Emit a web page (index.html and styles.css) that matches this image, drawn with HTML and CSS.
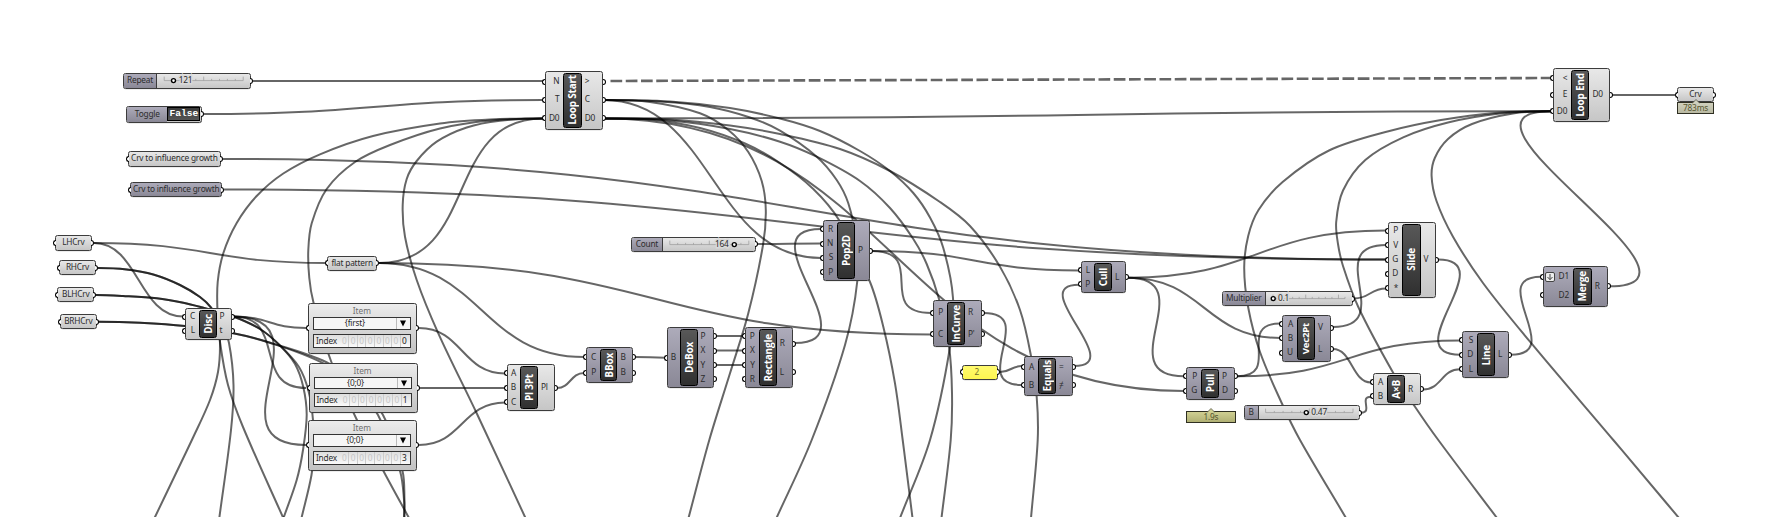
FILE: index.html
```html
<!DOCTYPE html>
<html lang="en">
<head>
<meta charset="utf-8">
<title>Growth definition</title>
<link rel="stylesheet" href="styles.css">
</head>
<body>
<main class="canvas" id="canvas">
<svg class="wires" id="wires" width="1788" height="517" viewBox="0 0 1788 517"></svg>
</main>
<script src="graph.js"></script>
</body>
</html>
```
FILE: styles.css
```css
* { box-sizing: border-box; }
body { margin: 0; background: #fff; }
.canvas {
  position: relative;
  width: 1788px;
  height: 517px;
  overflow: hidden;
  background: #fff;
  font-family: "Noto Sans", "Open Sans", sans-serif;
  font-size: 8.3px;
  letter-spacing: -.2px;
  line-height: 10px;
  color: #2c2c2c;
}
.wires { position: absolute; left: 0; top: 0; fill: none; stroke: #000; stroke-opacity: .6; stroke-width: 2; }
.wires .stream { stroke-width: 2.6; stroke-dasharray: 11.7 3.55; }

.box {
  position: absolute;
  display: flex;
  border: 1px solid #3c3c3c;
  border-radius: 2.5px;
  background: linear-gradient(#e8e8e8, #c6c6c6);
  box-shadow: 0 .3px .5px rgba(0,0,0,.3);
  white-space: nowrap;
}
.hidden { background: linear-gradient(#adabba, #8a8896); }

.grip {
  position: absolute;
  top: calc(50% - 3px);
  width: 3px;
  height: 6px;
  border: 1.4px solid #000;
  background: #fff;
}
.grip.in { right: 100%; border-right: 0; border-radius: 3px 0 0 3px; }
.grip.out { left: 100%; border-left: 0; border-radius: 0 3px 3px 0; }

/* Components: input column, name capsule, output column */
.ports { display: flex; flex-direction: column; padding: 1px 0; }
.ports.right { flex: 1; }
.port { position: relative; flex: 1; display: flex; align-items: center; }
.port span { position: relative; top: -.5px; }
.ports.left .port { justify-content: flex-end; padding-right: 4px; }
.ports.right .port { padding-left: 3px; }
.ports .grip.in { right: calc(100% + 1px); }
.ports .grip.out { left: calc(100% + 1px); }
.name {
  margin: 1px 0;
  border: 1px solid #000;
  border-radius: 2.5px;
  background: linear-gradient(#585858, #303030);
  display: flex;
  align-items: center;
  justify-content: center;
  color: #fff;
  font-family: "Open Sans", "Noto Sans", sans-serif;
  font-weight: 700;
  line-height: 16px;
}
.name span { writing-mode: vertical-rl; text-orientation: sideways; transform: rotate(180deg); }
.flatten { width: 10px; height: 10px; margin-right: 4px; flex: none; }

/* Floating parameters */
.param { align-items: center; justify-content: center; }
.param > span { position: relative; top: -.5px; }
.panel { background: linear-gradient(#fffa6e, #fdf650); color: #74702a; padding-right: 7px; }

/* Sliders and toggles */
.caption {
  display: flex; align-items: center; justify-content: center;
  background: linear-gradient(#adabba, #8a8896);
  border-right: 1px solid #3c3c3c;
  border-radius: 1.5px 0 0 1.5px;
  padding-bottom: 1px;
}
.track { flex: 1; }
.track svg { display: block; overflow: visible; }
.rail { stroke: #9a9a9a; stroke-width: .7; fill: none; }
.knob { stroke: #000; stroke-width: 1.4; fill: #fff; }
.halo { stroke: #d9d9d9; stroke-width: 3px; paint-order: stroke; fill: #2c2c2c; }
.switch {
  flex: 1; margin: 0 1px 1px 0;
  display: flex; align-items: center; justify-content: center;
  border: 1.5px solid #000;
  background: linear-gradient(#3a3a3a, #555);
  color: #fff; font: bold 9.6px/10px "Liberation Mono", monospace;
  letter-spacing: 0;
}
.toggle .caption { border-right: 0; }

/* List item pickers */
.item { flex-direction: column; padding: 1px 5px 5px 4px; background: linear-gradient(#ececec, #c2c2c2); }
.item .title { text-align: center; color: #707070; line-height: 11px; height: 13px; letter-spacing: 0; }
.item .select, .item .index { display: flex; border: 1px solid #333; background: #f6f6f6; }
.item .select { height: 12.5px; margin-bottom: 4px; }
.item .select b { flex: 1; text-align: center; font-weight: 400; line-height: 10px; }
.item .select i { width: 14px; border-left: 1px solid #bbb; display: flex; align-items: center; justify-content: center; }
.item .index { height: 14px; padding: 0 2px; line-height: 12px; background: linear-gradient(#dedede, #fafafa); }
.item .index span { flex: 1; }
.item .index u { width: 8.6px; text-align: center; text-decoration: none; color: #c6c6c6; border-right: 1px solid #ccc; }
.item .index u:last-child { color: #222; border: 0; width: 7px; }

/* Profiler tags */
.tag {
  position: absolute; border: 1px solid #2f2f22; text-align: center; line-height: 9.5px;
  background: linear-gradient(#cfcf92, #b0b074); color: #55552e;
}
.tag.fast { background: linear-gradient(#d0d0bd, #b9b9a2); }
.tag svg { position: absolute; left: calc(50% - 4px); top: -4px; display: block; }
```
FILE: graph.js
```js
const canvas = document.getElementById('canvas');
const wires = document.getElementById('wires');

/* ---------- wires ---------- */
function draw(d, cls) {
  const p = document.createElementNS('http://www.w3.org/2000/svg', 'path');
  p.setAttribute('d', d);
  if (cls) p.setAttribute('class', cls);
  wires.appendChild(p);
}
function link(x0, y0, x1, y1, pull) {
  const dx = x1 - x0, dy = Math.abs(y1 - y0);
  const d = pull || (dx > dy * 1.1 ? dx / 2 : Math.hypot(dx, dy) * 0.67);
  draw(`M${x0} ${y0}C${x0 + d} ${y0} ${x1 - d} ${y1} ${x1} ${y1}`);
}
function spline(...v) {
  const p = [];
  for (let i = 0; i < v.length; i += 2) p.push([v[i], v[i + 1]]);
  const m = p.map((q, i) => {
    if (i === 0) return [1 * Math.sign(p[1][0] - q[0]), 0];
    const a = p[i - 1], b = p[i + 1] || q;
    const l = Math.hypot(b[0] - a[0], b[1] - a[1]);
    return [(b[0] - a[0]) / l, (b[1] - a[1]) / l];
  });
  let d = `M${p[0]}`;
  for (let i = 0; i < p.length - 1; i++) {
    const a = p[i], b = p[i + 1], k = Math.hypot(b[0] - a[0], b[1] - a[1]) / 3;
    d += `C${a[0] + m[i][0] * k} ${a[1] + m[i][1] * k} ${b[0] - m[i + 1][0] * k} ${b[1] - m[i + 1][1] * k} ${b[0]} ${b[1]}`;
  }
  draw(d);
}

draw('M610.500 81L1550 78', 'stream');
[
  [253, 81, 543, 81], [204, 114, 543, 100], [223, 159, 1386, 259.5], [224, 189.5, 1386, 259.5],
  [94, 243, 326, 263], [94, 243, 183, 316.5], [379, 263, 543, 118.5, 100], [379, 263, 584, 357],
  [379, 263, 931, 334.5], [233, 316.5, 306, 328], [233, 316.5, 306, 388, 55], [233, 316.5, 306, 445],
  [419, 328, 505, 373.5], [420, 388, 505, 388], [419, 445, 505, 402.5], [557, 388, 584, 373],
  [635, 357, 665, 357.7], [716, 336, 743, 336], [716, 350.5, 743, 350.5], [716, 365, 743, 365],
  [795, 343, 821, 229], [757, 244, 821, 243.5], [604, 100, 821, 258], [604, 118.5, 1184, 391],
  [604, 118.5, 1551, 111.3], [872, 251, 1079, 270.5], [872, 251, 931, 313], [984, 313, 1022, 385],
  [1000, 372, 1022, 366], [1074, 366, 1079, 284.7], [1128, 277.7, 1386, 230.5], [1128, 277.7, 1280.5, 338],
  [1128, 277.7, 1184, 376.3], [1237, 376.3, 1280.5, 323.5], [1237, 376.3, 1460, 340.5],
  [1333, 327, 1386, 245], [1333, 349, 1371, 382.5], [1361, 412.7, 1371, 396.7], [1423, 389.5, 1460, 369.3],
  [1354, 298.5, 1386, 288.5], [1438, 259.5, 1460, 354.7], [1511, 354.7, 1541, 276.7],
  [1609, 286.3, 1551, 111.3, 125], [1612, 95, 1675, 95]
].forEach(w => link(...w));

/* wires that leave the visible part of the canvas */
spline(543,118.5, 490,119.5, 440,123.5, 373,136, 320,154.3, 283.3,173.5, 256.7,196, 236.7,223, 223.3,253.3, 217.7,282, 217.5,312, 220,342, 228,385, 243,427, 283.3,518);
spline(543,118.5, 490,120.5, 440,128.5, 390,145, 355,162, 326.7,189, 311.7,223.3, 308.3,250, 309.3,278, 313.3,301.7, 331,361, 356,418, 383.3,470.7, 409,518);
spline(543,118.5, 500,120.8, 466.7,127.5, 436.7,141.7, 416.7,161, 406.7,179, 402.7,205, 405,236.7, 416.7,280, 438.3,333.3, 476.7,413.3, 525.5,518);
spline(98,268, 126.7,269.5, 153.3,274.5, 180,285, 200,297, 211,307.5, 218,322, 220,345, 218,372, 210,400, 193.3,437, 154.5,518);
spline(98,268, 126.7,269.5, 153.3,274.5, 180,285, 200,297, 211,307.5, 222,324, 229,343, 233.5,385, 231,430, 219.3,518);
spline(96,295, 123,296, 156.7,298.3, 183.3,302.7, 201.7,307.3, 232,316, 260,329, 280,345.5, 295,364, 303.3,387, 306.7,415, 303,450, 296.7,480, 283.5,518);
spline(96,295, 123,296, 156.7,298.3, 183.3,302.7, 201.7,307.3, 232,316, 260,329, 280,345.5, 299,367, 308.5,391, 313,420, 313.5,450, 311.5,475, 301.5,518);
spline(98,321.7, 140,322.7, 185,326, 233.3,333.3, 270,342.7, 322,362.7, 355,386, 378,415, 400,471, 404,500, 404,518);
spline(98,321.7, 140,322.7, 185,326, 233.3,333.3, 270,342.7, 326,362, 358,385, 383,415, 402.5,471, 404.5,500, 404.5,518);
spline(604,100, 650,102, 700,113.3, 728.3,130, 748.3,152, 761.7,181, 765.8,210, 763,245, 748.3,313.3, 730,373.3, 709.3,440, 688.5,518);
spline(604,100, 660,101.5, 710,107, 750,117.5, 780,130.7, 816.7,156.7, 836.7,180, 848.3,203.3, 856,240, 857.3,281, 845,345, 811.7,440, 776.5,518);
spline(604,100, 670,101.5, 730,108, 780,118.5, 820,131, 860,151, 890,171, 913.3,193, 930,217.5, 943.3,248, 953,298, 950,347, 930,440, 900,518);
spline(604,118.5, 670,119.5, 730,125.5, 780,134, 840,149, 890,171, 940,202, 970,226, 1000,266.7, 1020,310, 1031,356, 1036.7,397, 1037.7,440, 1031,518);
spline(604,118.5, 670,120.5, 730,129, 780,141.7, 816.7,156.7, 860,181, 890,208, 913.3,239, 926.7,264, 939,299, 949,346, 952,393, 950.7,440, 941.5,518);
spline(604,118.5, 650,119.5, 700,128, 745,143.5, 780,163, 813.3,189, 839,220, 870,282, 883.3,326.7, 895,383.3, 902.7,440, 912.5,518);
spline(1551,111.3, 1495,113, 1441,120, 1389.5,131, 1329,150.5, 1282.6,182, 1258.5,210, 1248.2,236, 1244.2,268, 1248.3,308, 1260,352, 1281.7,403, 1300,440, 1346,518);
spline(1551,111.3, 1500,113.5, 1448,122.5, 1403.2,137.3, 1365.3,160, 1343,190.5, 1336.2,222, 1338,244, 1343,266, 1358.3,307, 1393.3,373, 1415,406.7, 1438.3,440, 1497,518);
spline(1551,111.3, 1513,113.5, 1472,124, 1448,139, 1434.8,158, 1431.6,176, 1436.5,201, 1453,236.7, 1483,283, 1530,341.7, 1613.3,440, 1679,518);

/* ---------- nodes ---------- */
function add(cls, x0, y0, x1, y1, html) {
  const e = document.createElement('div');
  e.className = cls;
  e.style.cssText = `left:${x0}px;top:${y0}px;width:${x1 - x0}px;height:${y1 - y0}px`;
  e.innerHTML = html;
  canvas.appendChild(e);
}
const IN = '<i class="grip in"></i>', OUT = '<i class="grip out"></i>';
const ARROW = '<svg class="flatten" viewBox="0 0 10 10"><rect x=".5" y=".5" width="9" height="9" rx="1.5" fill="#eee" stroke="#444"/><path d="M5 2v5.500M2.500 5L5 7.700 7.500 5" fill="none" stroke="#333" stroke-width=".9"/></svg>';

function component(dark, x0, y0, x1, y1, l0, l1, name, ins, outs, size) {
  const left = ins.map(p => `<div class="port">${IN}${p === 'D1' ? ARROW : ''}<span>${p}</span></div>`).join('');
  const right = outs.map(p => `<div class="port"><span>${p}</span>${OUT}</div>`).join('');
  add('box' + (dark ? ' hidden' : ''), x0, y0, x1, y1,
    `<div class="ports left" style="width:${l0 - x0 - 1}px">${left}</div>` +
    `<div class="name" style="width:${l1 - l0}px;font-size:${size || 10}px"><span>${name}</span></div>` +
    `<div class="ports right">${right}</div>`);
}
component(0, 545, 70.5, 602.7, 129.5, 563.3, 581.7, 'Loop Start', ['N', 'T', 'D0'], ['&gt;', 'C', 'D0']);
component(0, 1553, 67.7, 1610.3, 121.7, 1571.2, 1589.5, 'Loop End', ['&lt;', 'E', 'D0'], ['D0']);
component(0, 185, 307.5, 231.7, 339.5, 199, 216.5, 'Disc', ['C', 'L'], ['P', 't']);
component(0, 506.7, 364.3, 555.5, 411.3, 520, 538, 'Pl 3Pt', ['A', 'B', 'C'], ['Pl']);
component(1, 586.3, 347.3, 632.7, 382.7, 600, 617.5, 'BBox', ['C', 'P'], ['B', 'B']);
component(1, 667, 327.3, 713.7, 388.5, 680, 697.5, 'DeBox', ['B'], ['P', 'X', 'Y', 'Z']);
component(1, 745, 327.3, 792.7, 388.5, 758.7, 776.7, 'Rectangle', ['P', 'X', 'Y', 'R'], ['R', 'L']);
component(1, 823, 220.3, 870, 281.3, 837, 855, 'Pop2D', ['R', 'N', 'S', 'P'], ['P']);
component(1, 933.3, 300.3, 982.3, 346.7, 947, 965, 'InCurve', ['P', 'C'], ['R', 'P&#39;']);
component(1, 1024.3, 356, 1072.7, 396, 1038, 1056, 'Equals', ['A', 'B'], ['=', '≠']);
component(1, 1081, 261.3, 1126.3, 293.5, 1094, 1112, 'Cull', ['L', 'P'], ['L']);
component(1, 1186.3, 367.3, 1235, 399.7, 1201, 1219, 'Pull', ['P', 'G'], ['P', 'D']);
component(1, 1282.3, 315, 1330.7, 361.7, 1297, 1315, 'Vec2Pt', ['A', 'B', 'U'], ['V', 'L'], 9.6);
component(0, 1388, 221.5, 1436.3, 297.5, 1402, 1420.5, 'Slide', ['P', 'V', 'G', 'D', '*'], ['V']);
component(0, 1373.3, 373.3, 1421, 405.3, 1387, 1405, 'A×B', ['A', 'B'], ['R']);
component(1, 1462.3, 331.3, 1509.3, 378.5, 1477, 1495, 'Line', ['S', 'D', 'L'], ['L']);
component(1, 1543, 265.7, 1607.7, 306.7, 1573, 1591.7, 'Merge', ['D1', 'D2'], ['R']);

function param(cls, x0, y0, x1, y1, text) {
  add('box param ' + cls, x0, y0, x1, y1, `${IN}<span>${text}</span>${OUT}`);
}
param('', 128, 151.3, 220.7, 166.7, 'Crv to influence growth');
param('hidden', 130, 182, 222.3, 197, 'Crv to influence growth');
param('', 55, 235.3, 91.7, 250.7, 'LHCrv');
param('', 59, 260.3, 96, 275.5, 'RHCrv');
param('', 57.3, 287.3, 94.3, 302.3, 'BLHCrv');
param('', 60, 314, 96.7, 329, 'BRHCrv');
param('', 327.3, 255.5, 377, 271, 'flat pattern');
param('', 1677, 87.3, 1713.8, 102.3, 'Crv');
param('panel', 962, 364.7, 998.3, 379.7, '2');

/* c: end of the caption, a..b: rail, n: divisions, k: knob, t: text start */
function slider(x0, y0, x1, y1, c, caption, a, b, n, k, t, value) {
  const w = x1 - c, h = y1 - y0 - 2;
  let d = '';
  for (let i = 0; i <= n; i++) {
    const x = a + (b - a) * i / n - c, up = i % 5 === 0 ? 4 : 1.7;
    d += `M${x} 6.600v${-up}`;
  }
  add('box slider', x0, y0, x1, y1,
    `<div class="caption" style="width:${c - x0}px">${caption}</div>` +
    `<div class="track"><svg width="${w - 1}" height="${h}"><path class="rail" d="M${a - c} 6.600H${b - c}${d}"/>` +
    `<text class="halo" x="${t - c}" y="9.300">${value}</text>` +
    `<circle class="knob" cx="${k - c}" cy="6.600" r="2"/></svg></div>${OUT}`);
}
slider(122.7, 73.3, 250.7, 88.7, 157.3, 'Repeat', 164.5, 243.5, 10, 173.8, 179, '121');
slider(631.3, 237, 755.7, 251.7, 662.5, 'Count', 669.3, 748.3, 10, 733.8, 714.5, '164');
slider(1222, 291, 1352.7, 306, 1265.5, 'Multiplier', 1272.5, 1344.5, 11, 1272.7, 1277.5, '0.1');
slider(1243.5, 405.3, 1359.7, 420.3, 1258.7, 'B', 1265.3, 1352.7, 10, 1306, 1311, '0.47');

add('box toggle', 126.3, 106, 202.3, 122.7,
  `<div class="caption" style="width:40px">Toggle</div><div class="switch">False</div>${OUT}`);

function item(x0, y0, x1, y1, path, index) {
  add('box item', x0, y0, x1, y1,
    `${IN}<div class="title">Item</div>` +
    `<div class="select"><b>${path}</b><i><svg width="6" height="7"><path d="M0 .5h6L3 6.500z"/></svg></i></div>` +
    `<div class="index"><span>Index</span>${'<u>0</u>'.repeat(7)}<u>${index}</u></div>${OUT}`);
}
item(308, 302.5, 416.7, 353.5, '{first}', 0);
item(308.5, 362.5, 417.5, 413.3, '{0;0}', 1);
item(308, 419.5, 416.7, 470.5, '{0;0}', 3);

const tip = fill => `<svg width="8" height="5"><path d="M0 4.500L4 .5 8 4.500" fill="${fill}" stroke="#55554a" stroke-width=".8"/></svg>`;
add('tag fast', 1677, 102.3, 1714, 113.7, tip('#d0d0bd') + '783ms');
add('tag', 1186, 411.3, 1235.7, 423, tip('#cfcf92') + '1.9s');
```
